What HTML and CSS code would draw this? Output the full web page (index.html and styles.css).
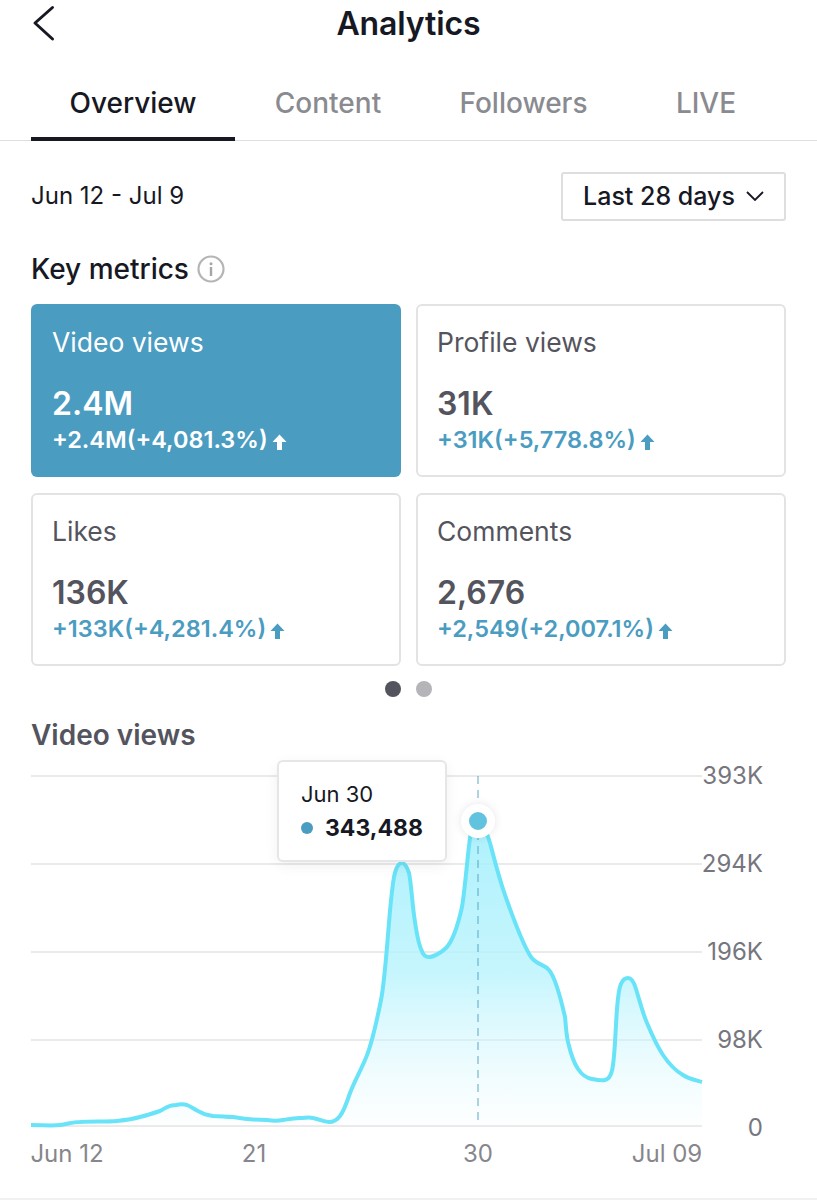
FILE: index.html
```html
<!DOCTYPE html>
<html lang="en">
<head>
    <meta charset="UTF-8">
    <meta name="viewport" content="width=device-width, initial-scale=1.0">
    <title>Analytics</title>
    <link rel="stylesheet" href="styles.css">
</head>
<body>
    <div class="page">
        <header class="topbar">
            <svg class="back" width="24" height="36" viewBox="0 0 24 36"><path d="M22.500 3.500 L5 19 L22.500 35" fill="none" stroke="#161823" stroke-width="3" stroke-linecap="round" stroke-linejoin="round"/></svg>
            <h1>Analytics</h1>
        </header>

        <nav class="tabs">
            <a class="tab active">Overview</a>
            <a class="tab">Content</a>
            <a class="tab">Followers</a>
            <a class="tab">LIVE</a>
        </nav>

        <div class="range-row">
            <span class="range-text">Jun 12 - Jul 9</span>
            <div class="range-btn">
                Last 28 days
                <svg width="18" height="10" viewBox="0 0 18 10"><path d="M1 1 L9 9 L17 1" fill="none" stroke="#161823" stroke-width="1.800"/></svg>
            </div>
        </div>

        <div class="metrics-head">
            <h2>Key metrics</h2>
            <svg width="28" height="28" viewBox="0 0 28 28"><circle cx="14" cy="14" r="12.500" fill="none" stroke="#b4b5b9" stroke-width="2.200"/><circle cx="14" cy="8.800" r="1.500" fill="#a5a6aa"/><rect x="12.800" y="12" width="2.400" height="9" fill="#a5a6aa"/></svg>
        </div>

        <div class="cards">
            <div class="card selected">
                <div class="card-title">Video views</div>
                <div class="card-value">2.4M</div>
                <div class="card-change">+2.4M(+4,081.3%) <svg class="up" width="15" height="16" viewBox="0 0 15 16"><path d="M7.500 0.500 L14.500 8 H10 V16 H5 V8 H0.500 Z" fill="currentColor"/></svg></div>
            </div>
            <div class="card">
                <div class="card-title">Profile views</div>
                <div class="card-value">31K</div>
                <div class="card-change">+31K(+5,778.8%) <svg class="up" width="15" height="16" viewBox="0 0 15 16"><path d="M7.500 0.500 L14.500 8 H10 V16 H5 V8 H0.500 Z" fill="currentColor"/></svg></div>
            </div>
            <div class="card">
                <div class="card-title">Likes</div>
                <div class="card-value">136K</div>
                <div class="card-change">+133K(+4,281.4%) <svg class="up" width="15" height="16" viewBox="0 0 15 16"><path d="M7.500 0.500 L14.500 8 H10 V16 H5 V8 H0.500 Z" fill="currentColor"/></svg></div>
            </div>
            <div class="card">
                <div class="card-title">Comments</div>
                <div class="card-value">2,676</div>
                <div class="card-change">+2,549(+2,007.1%) <svg class="up" width="15" height="16" viewBox="0 0 15 16"><path d="M7.500 0.500 L14.500 8 H10 V16 H5 V8 H0.500 Z" fill="currentColor"/></svg></div>
            </div>
        </div>

        <div class="dots">
            <span class="dot on"></span>
            <span class="dot"></span>
        </div>

        <h2 class="chart-title">Video views</h2>

        <div class="chart">
            <svg class="plot" width="817" height="380" viewBox="0 760 817 380">
                <defs>
                    <linearGradient id="areaFill" x1="0" y1="0" x2="0" y2="1">
                        <stop offset="0" stop-color="#a0effc" stop-opacity="0.85"/>
                        <stop offset="0.5" stop-color="#b8f3fd" stop-opacity="0.8"/>
                        <stop offset="1" stop-color="#d8f8fd" stop-opacity="0.05"/>
                    </linearGradient>
                </defs>
                <g stroke="#d5d5d8" stroke-width="1.200">
                    <line x1="31" y1="776" x2="702" y2="776"/>
                    <line x1="31" y1="864" x2="702" y2="864"/>
                    <line x1="31" y1="952" x2="702" y2="952"/>
                    <line x1="31" y1="1040" x2="702" y2="1040"/>
                    <line x1="31" y1="1126" x2="702" y2="1126"/>
                </g>
                <path fill="url(#areaFill)" d="M31 1125 C42 1125 52 1126 60 1125 C68 1124 72 1122 80 1122 C92 1121 106 1122 117 1121 C126 1120 133 1119 140 1117 C148 1115 154 1113 160 1111 C166 1108 168 1105 176 1105 C180 1104 184 1104 187 1105 C192 1107 195 1110 200 1112 C205 1115 208 1115 213 1116 C220 1116 226 1117 233 1117 C245 1119 255 1120 267 1120 C273 1121 278 1121 283 1120 C289 1119 294 1118 300 1118 C305 1118 309 1117 313 1118 C319 1119 323 1122 329 1122 C334 1122 337 1120 340 1116 C344 1111 347 1102 350 1093 C354 1082 360 1072 365 1060 C372 1045 378 1015 381 1000 C384 985 386 960 388 935 C390 910 391 895 394 877 C396 867 399 863 402 863 C405 863 407 867 409 873 C411 882 412 900 414 915 C416 930 418 942 421 949 C423 955 425 957 429 957 C433 957 441 953 446 948 C452 942 458 925 462 907 C465 890 467 860 470 838 C472 825 474 820 478 820 C482 820 486 830 490 843 C494 858 499 878 505 895 C512 915 523 945 531 957 C537 965 544 964 549 970 C555 977 560 995 565 1017 C566 1026 566 1033 568 1042 C571 1055 574 1063 578 1069 C582 1075 586 1078 592 1079 C597 1080 602 1081 605 1080 C610 1079 612 1073 613 1065 C615 1050 615 1040 616 1025 C617 1005 618 990 621 984 C623 979 626 978 628 978 C632 978 634 982 636 989 C640 1002 643 1014 647 1023 C652 1035 657 1046 663 1055 C669 1064 676 1071 683 1075 C689 1079 695 1080 702 1082 L702 1126 L31 1126 Z"/>
                <line x1="478" y1="776" x2="478" y2="1126" stroke="#4f9fc0" stroke-width="1.500" stroke-dasharray="8 6" opacity="0.6"/>
                <path fill="none" stroke="#69e3f7" stroke-width="4" d="M31 1125 C42 1125 52 1126 60 1125 C68 1124 72 1122 80 1122 C92 1121 106 1122 117 1121 C126 1120 133 1119 140 1117 C148 1115 154 1113 160 1111 C166 1108 168 1105 176 1105 C180 1104 184 1104 187 1105 C192 1107 195 1110 200 1112 C205 1115 208 1115 213 1116 C220 1116 226 1117 233 1117 C245 1119 255 1120 267 1120 C273 1121 278 1121 283 1120 C289 1119 294 1118 300 1118 C305 1118 309 1117 313 1118 C319 1119 323 1122 329 1122 C334 1122 337 1120 340 1116 C344 1111 347 1102 350 1093 C354 1082 360 1072 365 1060 C372 1045 378 1015 381 1000 C384 985 386 960 388 935 C390 910 391 895 394 877 C396 867 399 863 402 863 C405 863 407 867 409 873 C411 882 412 900 414 915 C416 930 418 942 421 949 C423 955 425 957 429 957 C433 957 441 953 446 948 C452 942 458 925 462 907 C465 890 467 860 470 838 C472 825 474 820 478 820 C482 820 486 830 490 843 C494 858 499 878 505 895 C512 915 523 945 531 957 C537 965 544 964 549 970 C555 977 560 995 565 1017 C566 1026 566 1033 568 1042 C571 1055 574 1063 578 1069 C582 1075 586 1078 592 1079 C597 1080 602 1081 605 1080 C610 1079 612 1073 613 1065 C615 1050 615 1040 616 1025 C617 1005 618 990 621 984 C623 979 626 978 628 978 C632 978 634 982 636 989 C640 1002 643 1014 647 1023 C652 1035 657 1046 663 1055 C669 1064 676 1071 683 1075 C689 1079 695 1080 702 1082"/>
            </svg>
            <div class="marker"></div>
            <div class="tooltip">
                <div class="tip-date">Jun 30</div>
                <div class="tip-value"><span class="tip-dot"></span>343,488</div>
            </div>
            <div class="y-axis">
                <span>393K</span>
                <span>294K</span>
                <span>196K</span>
                <span>98K</span>
                <span>0</span>
            </div>
            <div class="x-axis">
                <span>Jun 12</span>
                <span>21</span>
                <span>30</span>
                <span>Jul 09</span>
            </div>
        </div>
    </div>
</body>
</html>
```

FILE: styles.css
```css
* { box-sizing: border-box; }
body { margin: 0; background: #fff; font-family: "Liberation Sans", Arial, sans-serif; color: #161823; }
.page { width: 817px; height: 1200px; overflow: hidden; border-bottom: 2px solid #f1f1f2; }

.topbar { height: 46px; display: flex; justify-content: center; align-items: center; position: relative; }
.topbar h1 { margin: 0; font-family: Inter, sans-serif; font-size: 32px; font-weight: 600; letter-spacing: -0.1px; }
.back { position: absolute; left: 30px; top: 4px; overflow: visible; }

.tabs { margin-top: 35px; height: 60px; padding: 0 31px; display: flex; border-bottom: 1.500px solid #dedee0; }
.tab { font-family: Inter, sans-serif; font-size: 28px; font-weight: 500; color: #8a8b91; height: 60px; padding-top: 5px; text-align: center; }
.tab:nth-child(1) { width: 204px; }
.tab:nth-child(2) { width: 186px; }
.tab:nth-child(3) { width: 205px; }
.tab:nth-child(4) { width: 160px; }
.tab.active { color: #161823; border-bottom: 4px solid #161823; }

.range-row { padding: 29px 31px 0; height: 81px; display: flex; justify-content: space-between; align-items: center; }
.range-text { font-family: Inter, sans-serif; font-size: 24px; margin-bottom: 2px; }
.range-btn { width: 225px; height: 49px; border: 2px solid #dedee0; border-radius: 3px; display: flex; align-items: center; justify-content: center; gap: 11px; font-family: Inter, sans-serif; font-size: 25px; font-weight: 500; }

.metrics-head { padding: 0 31px; margin-top: 29px; display: flex; align-items: center; gap: 8px; height: 36px; }
h2 { margin: 0; font-family: Inter, sans-serif; font-size: 28px; font-weight: 500; }

.cards { margin: 17px 31px 0; display: grid; grid-template-columns: 370px 370px; grid-auto-rows: 173px; gap: 16px 15px; }
.card { border: 2px solid #e3e3e5; border-radius: 6px; padding: 20px 19px 0; color: #54545e; }
.card.selected { background: #4a9cc1; border: none; color: #fff; padding: 22px 21px 0; }
.card-title { font-family: Inter, sans-serif; font-size: 26.500px; line-height: 32px; }
.card-value { font-family: Inter, sans-serif; font-size: 32px; font-weight: 600; line-height: 38px; margin-top: 27px; }
.card-change { font-family: Inter, sans-serif; font-size: 23.500px; font-weight: 600; line-height: 26px; margin-top: 4px; color: #4a9cc1; white-space: nowrap; }
.card.selected .card-change { color: #fff; }
.up { vertical-align: -2px; margin-left: -2px; }

.dots { margin-top: 15px; display: flex; justify-content: center; gap: 15px; }
.dot { width: 16px; height: 16px; border-radius: 50%; background: #b5b5b9; }
.dot.on { background: #54545e; }

.chart-title { margin: 20px 31px 0; color: #54545e; font-weight: 600; line-height: 36px; }

.chart { position: relative; height: 447px; }
.plot { position: absolute; left: 0; top: 7px; }
.marker { position: absolute; left: 461px; top: 51px; width: 34px; height: 34px; border-radius: 50%; background: #62c3df; border: 8px solid #fff; box-shadow: 0 0 10px rgba(0, 0, 0, 0.1); }
.tooltip { position: absolute; left: 277px; top: 7px; width: 170px; height: 102px; background: #fff; border: 2px solid #e6e6e8; border-radius: 6px; padding: 17px 22px; box-shadow: 0 4px 14px rgba(0, 0, 0, 0.06); }
.tip-date { font-family: Inter, sans-serif; font-size: 22px; line-height: 30px; }
.tip-value { font-family: Inter, sans-serif; font-size: 23px; font-weight: 700; line-height: 38px; display: flex; align-items: center; }
.tip-dot { flex-shrink: 0; width: 12px; height: 12px; border-radius: 50%; background: #4a9cc1; margin-right: 12px; }
.y-axis { position: absolute; right: 54px; top: 7px; color: #76767e; font-family: Inter, sans-serif; font-size: 24px; display: flex; flex-direction: column; align-items: flex-end; }
.y-axis span { height: 88px; line-height: 32px; }
.x-axis span { position: absolute; top: 385px; color: #86868c; font-family: Inter, sans-serif; font-size: 24px; line-height: 32px; transform: translateX(-50%); }
.x-axis span:nth-child(1) { left: 67px; }
.x-axis span:nth-child(2) { left: 254px; }
.x-axis span:nth-child(3) { left: 478px; }
.x-axis span:nth-child(4) { left: 667px; }
```
